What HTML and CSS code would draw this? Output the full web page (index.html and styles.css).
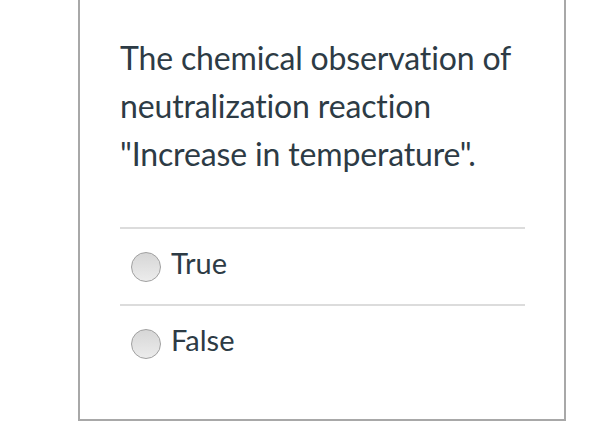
FILE: index.html
```html
<!DOCTYPE html>
<html>
<head>
<meta charset="utf-8">
<link rel="stylesheet" href="styles.css">
</head>
<body>
<div class="card">
  <div class="question">The chemical observation of neutralization reaction "Increase in temperature".</div>
  <div class="answers">
    <div class="answer"><span class="radio"></span><span class="label">True</span></div>
    <div class="answer"><span class="radio"></span><span class="label">False</span></div>
  </div>
</div>
</body>
</html>
```

FILE: styles.css
```css
html, body {
  margin: 0;
  padding: 0;
  background: #fff;
}
body {
  font-family: Lato, "Open Sans", sans-serif;
  color: #2d3b45;
  width: 596px;
  height: 425px;
  overflow: hidden;
  font-variant-ligatures: none;
}
.card {
  margin-left: 78px;
  height: 419px;
  border: 2px solid #a8a8a8;
  border-top: none;
  padding: 0 39px 0 40px;
  box-sizing: content-box;
  width: 405px;
}
.question {
  padding-top: 34px;
  font-size: 32px;
  line-height: 48px;
  letter-spacing: -0.15px;
  height: 193px;
}
.answers {
  display: flex;
  flex-direction: column;
}
.answer {
  border-top: 2px solid #dcdcdc;
  height: 75px;
  display: flex;
  align-items: center;
  padding-left: 11px;
}
.radio {
  width: 28px;
  height: 28px;
  flex: none;
  border-radius: 50%;
  border: 1px solid #a0a0a0;
  background: linear-gradient(#d6d6d6, #ececec);
  margin-right: 10px;
  margin-top: 1px;
}
.label {
  font-size: 29px;
  padding-bottom: 9px;
}
```
